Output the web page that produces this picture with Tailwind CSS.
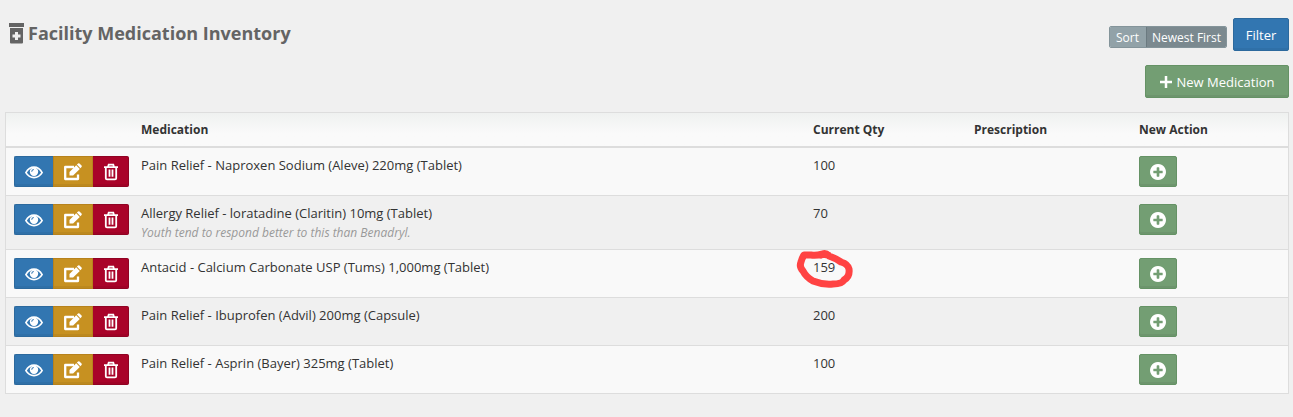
<!DOCTYPE html>
<html lang="en">
<head>
    <meta charset="UTF-8">
    <meta name="viewport" content="width=device-width, initial-scale=1.0">
    <title>Facility Medication Inventory</title>
    <script src="https://cdn.jsdelivr.net/npm/@tailwindcss/browser@4"></script>
</head>
<body class="bg-[#f0f0f0] font-['Open_Sans',sans-serif] text-[13px] leading-[18px] text-[#333]">
    <!-- icons -->
    <svg class="hidden">
        <symbol id="eye" viewBox="0 0 18 18">
            <path d="M.9 9.600Q4 4.200 9 4.200T17.100 9.600Q14 14.600 9 14.600T.9 9.600Z" fill="none" stroke="currentColor" stroke-width="1.700"/>
            <path fill-rule="evenodd" d="M9 4.600A4.200 4.200 0 1 1 9 13A4.200 4.200 0 1 1 9 4.600ZM8.800 6.100Q6.300 6.300 6.200 8.800H7.200Q7.300 7.200 8.800 7.100Z"/>
        </symbol>
        <symbol id="edit" viewBox="0 0 18 18">
            <path d="M10 4H1.200V16H14V11.500" fill="none" stroke="currentColor" stroke-width="2.300" stroke-linejoin="round"/>
            <path d="M5.500 9L12.200 2.300L15.800 5.900L9.100 12.500H5.500ZM12.900 1.600L14.100 .5Q14.800 -.1 15.500 .5L17.500 2.500Q18.200 3.200 17.500 3.900L16.400 5.200Z"/>
        </symbol>
        <symbol id="trash" viewBox="0 0 16 18">
            <path d="M1 4.200H15M5 4L5.700 1.700H10.300L11 4" fill="none" stroke="currentColor" stroke-width="1.800"/>
            <path d="M2.800 4V15.200Q2.800 16.400 4 16.400H12Q13.200 16.400 13.200 15.200V4M6.500 6.500V13.700M9.500 6.500V13.700" fill="none" stroke="currentColor" stroke-width="1.800"/>
        </symbol>
        <symbol id="plus-circle" viewBox="128 128 1536 1536">
            <path d="M1344 960v-128q0-26-19-45t-45-19h-256v-256q0-26-19-45t-45-19h-128q-26 0-45 19t-19 45v256h-256q-26 0-45 19t-19 45v128q0 26 19 45t45 19h256v256q0 26 19 45t45 19h128q26 0 45-19t19-45v-256h256q26 0 45-19t19-45zM1664 896q0 209-103 385.500t-279.500 279.500-385.500 103-385.500-103-279.500-279.500-103-385.500 103-385.500 279.500-279.500 385.500-103 385.500 103 279.500 279.500 103 385.500z"/>
        </symbol>
    </svg>

    <div class="pl-[5px] pr-1 pt-[18px]">
        <div class="flex justify-between items-start">
            <h1 class="flex items-center gap-1 pl-1 text-lg leading-[30px] font-bold text-[#646464]">
                <svg class="w-[15px] h-[21px]" viewBox="0 0 15 21" fill="currentColor">
                    <path d="M0 0H15V4H0Z"/>
                    <path fill-rule="evenodd" d="M1 5H14V19.500Q14 20.500 13 20.500H2Q1 20.500 1 19.500ZM6 9V11.500H3.500V14.500H6V17H9V14.500H11.500V11.500H9V9Z"/>
                </svg>
                Facility Medication Inventory
            </h1>
            <div class="flex flex-col items-end gap-[14px]">
                <div class="flex items-start gap-[6px]">
                    <div class="flex mt-2 h-[22px] rounded-xs border border-[#84949a] text-xs leading-5 text-white overflow-hidden">
                        <span class="bg-[#92a2a8] pl-[6px] pr-[7px] pt-px">Sort</span>
                        <button type="button" class="bg-[#7b898f] border-l border-[#6b7a80] px-[5px] pt-px">Newest First</button>
                    </div>
                    <button type="button" class="h-[33px] w-14 rounded-xs bg-[#3276b1] border border-[#2c699d] text-white shadow-[inset_0_-2px_0_rgba(0,0,0,0.05)]">Filter</button>
                </div>
                <button type="button" class="flex items-center justify-center gap-[5px] h-[33px] w-36 rounded-xs bg-[#739e73] border border-[#659265] text-white shadow-[inset_0_-2px_0_rgba(0,0,0,0.05)]">
                    <svg class="w-3 h-3" viewBox="0 0 12 12"><path d="M6 0V12M0 6H12" stroke="currentColor" stroke-width="2.500"/></svg>
                    New Medication
                </button>
            </div>
        </div>

        <div class="mt-[14px] border border-[#ddd]">
            <table class="w-full table-fixed border-separate border-spacing-0">
                <thead>
                    <tr class="bg-linear-to-b from-[#eff1f0] to-[#fafafa] to-60% text-left text-xs leading-[17px]">
                        <th class="w-[127px] p-2 border-b-2 border-[#ddd]"></th>
                        <th class="p-2 border-b-2 border-[#ddd]">Medication</th>
                        <th class="w-[161px] p-2 border-b-2 border-[#ddd]">Current Qty</th>
                        <th class="w-[165px] p-2 border-b-2 border-[#ddd]">Prescription</th>
                        <th class="w-[157px] p-2 border-b-2 border-[#ddd]">New Action</th>
                    </tr>
                </thead>
                <tbody id="rows"></tbody>
            </table>
        </div>
    </div>

    <script>
        const items = [
            { name: 'Pain Relief - Naproxen Sodium (Aleve) 220mg (Tablet)', qty: 100 },
            { name: 'Allergy Relief - loratadine (Claritin) 10mg (Tablet)', qty: 70, note: 'Youth tend to respond better to this than Benadryl.' },
            { name: 'Antacid - Calcium Carbonate USP (Tums) 1,000mg (Tablet)', qty: 159, marked: true },
            { name: 'Pain Relief - Ibuprofen (Advil) 200mg (Capsule)', qty: 200 },
            { name: 'Pain Relief - Asprin (Bayer) 325mg (Tablet)', qty: 100 },
        ];
        const note = (text) => `<p class="mt-[3px] text-xs leading-4 italic text-[#999]">${text}</p>`;
        // hand drawn ring around the quantity
        const ring = `<svg class="absolute -left-[17px] -top-[9px] w-[60px] h-[42px] pointer-events-none" viewBox="0 0 60 42" fill="none" stroke="#ff4343" stroke-width="7" stroke-linecap="round" stroke-linejoin="round">
            <path d="M32 6L26 5Q20 7 15 6L8 6Q6 9 5 13Q3 18 7 22Q10 28 17 32Q27 36 37 35Q46 35 48 31Q54 28 53 20Q52 15 45 13Q39 9 33 7Q29 3 25 6"/>
        </svg>`;
        document.getElementById('rows').innerHTML = items.map((item) => `
            <tr class="group align-top odd:bg-[#f9f9f9]">
                <td class="p-2 border-b border-[#ddd] group-last:border-b-0">
                    <div class="flex w-[115px] h-[31px] text-white">
                        <button type="button" aria-label="View" class="flex w-[39px] items-center justify-center rounded-l-xs bg-[#3276b1] border border-r-0 border-[#2c699d] shadow-[inset_0_-2px_0_rgba(0,0,0,0.05)]"><svg class="w-[18px] h-[18px]" fill="currentColor"><use href="#eye"/></svg></button>
                        <button type="button" aria-label="Edit" class="flex w-10 items-center justify-center bg-[#c79121] border border-[#b7821c] shadow-[inset_0_-2px_0_rgba(0,0,0,0.05)]"><svg class="w-[18px] h-[18px]" fill="currentColor"><use href="#edit"/></svg></button>
                        <button type="button" aria-label="Delete" class="flex w-9 items-center justify-center rounded-r-xs bg-[#a90329] border border-l-0 border-[#900323] shadow-[inset_0_-2px_0_rgba(0,0,0,0.05)]"><svg class="w-4 h-[18px]" fill="currentColor"><use href="#trash"/></svg></button>
                    </div>
                </td>
                <td class="p-2 border-b border-[#ddd] group-last:border-b-0">${item.name}${item.note ? note(item.note) : ''}</td>
                <td class="p-2 border-b border-[#ddd] group-last:border-b-0"><span class="relative">${item.qty}${item.marked ? ring : ''}</span></td>
                <td class="p-2 border-b border-[#ddd] group-last:border-b-0"></td>
                <td class="p-2 border-b border-[#ddd] group-last:border-b-0">
                    <button type="button" aria-label="New action" class="flex w-[38px] h-[31px] items-center justify-center rounded-xs bg-[#739e73] border border-[#659265] text-white shadow-[inset_0_-2px_0_rgba(0,0,0,0.05)]"><svg class="w-4 h-4" fill="currentColor"><use href="#plus-circle"/></svg></button>
                </td>
            </tr>`).join('');
    </script>
</body>
</html>
